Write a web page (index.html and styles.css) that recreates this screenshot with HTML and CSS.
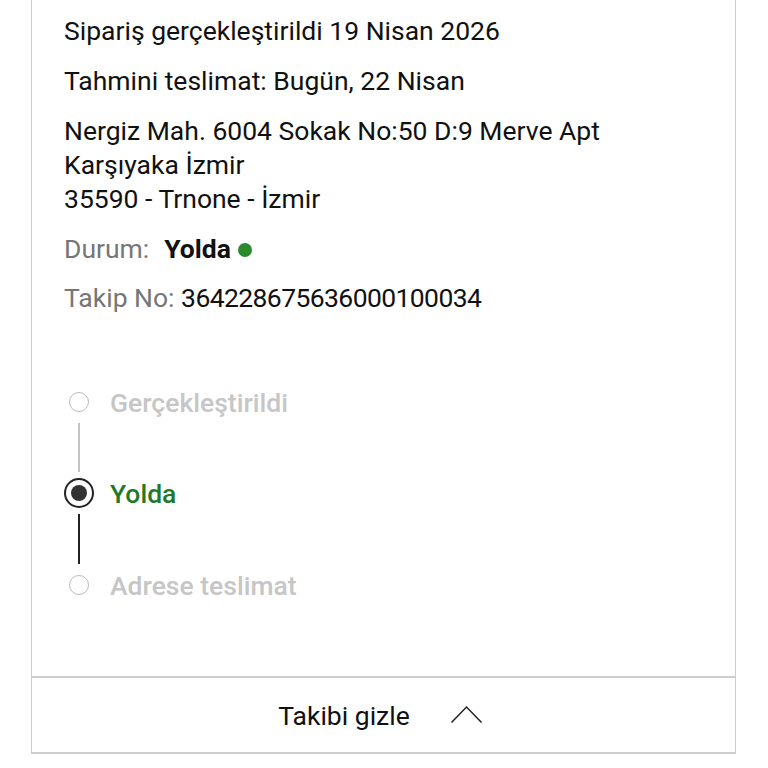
FILE: index.html
```html
<!DOCTYPE html>
<html lang="tr">
<head>
<meta charset="utf-8">
<link rel="stylesheet" href="styles.css">
</head>
<body>
<div class="card">
  <div class="info">
    <p class="line">Sipariş gerçekleştirildi 19 Nisan 2026</p>
    <p class="line">Tahmini teslimat: Bugün, 22 Nisan</p>
    <p class="line address">Nergiz Mah. 6004 Sokak No:50 D:9 Merve Apt<br>Karşıyaka İzmir<br>35590 - Trnone - İzmir</p>
    <p class="line status"><span class="label">Durum:</span><b class="value">Yolda</b><span class="dot"></span></p>
    <p class="line"><span class="label">Takip No:</span> <span class="tracking">364228675636000100034</span></p>
  </div>
  <div class="timeline">
    <div class="step done">
      <div class="marker"><span class="ring"></span></div>
      <span class="step-label">Gerçekleştirildi</span>
    </div>
    <div class="connector grey"></div>
    <div class="step active">
      <div class="marker"><span class="ring big"><span class="core"></span></span></div>
      <span class="step-label">Yolda</span>
    </div>
    <div class="connector dark"></div>
    <div class="step pending">
      <div class="marker"><span class="ring"></span></div>
      <span class="step-label">Adrese teslimat</span>
    </div>
  </div>
  <div class="footer">
    <span class="footer-text">Takibi gizle</span>
    <svg class="chev" width="33" height="19" viewBox="0 0 33 19"><path d="M1.5 17.5 L16.5 2 L31.5 17.5" fill="none" stroke="#222" stroke-width="1.5"/></svg>
  </div>
</div>
</body>
</html>
```
FILE: styles.css
```css
html, body { margin: 0; padding: 0; background: #fff; }
body { font-family: Roboto, "Noto Sans", sans-serif; color: #111; }
.card {
  margin-left: 31px;
  width: 703px;
  border-left: 1.5px solid #cdcdcd;
  border-right: 1.5px solid #cdcdcd;
  border-bottom: 2px solid #cdcdcd;
}
.info { padding: 14px 0 0 32px; }
.line { margin: 0 0 16px; font-size: 26.5px; line-height: 34px; }
.status { margin-bottom: 15px; }
.label { color: #767676; }
.tracking { letter-spacing: -0.6px; }
.status .value { font-weight: 700; margin-left: 15px; color: #111; }
.dot { display: inline-block; width: 14px; height: 14px; border-radius: 50%; background: #2a8a2e; margin-left: 7px; vertical-align: 1px; }
.timeline { padding: 56px 0 76px 32px; }
.step { display: flex; align-items: center; height: 30px; }
.marker { width: 30px; display: flex; justify-content: center; margin-right: 16px; }
.ring { width: 20px; height: 20px; border: 1.5px solid #bbbbbb; border-radius: 50%; box-sizing: border-box; display: flex; align-items: center; justify-content: center; }
.ring.big { width: 30px; height: 30px; border: 2px solid #222; }
.core { width: 16px; height: 16px; border-radius: 50%; background: #333; }
.step-label { font-size: 26.5px; font-weight: 500; color: #c6c6c6; }
.active .step-label { color: #1f7a28; }
.connector { width: 2px; height: 49px; margin: 6px 0 6px 14px; }
.connector.grey { background: #c4c4c4; }
.connector.dark { background: #222; height: 50px; }
.footer {
  border-top: 2px solid #cdcdcd;
  height: 74px;
  display: flex; align-items: center; justify-content: center; gap: 40px;
  padding-right: 6px;
}
.footer-text { font-size: 26.5px; color: #111; }
.chev { display: block; margin-top: -2px; }
```
